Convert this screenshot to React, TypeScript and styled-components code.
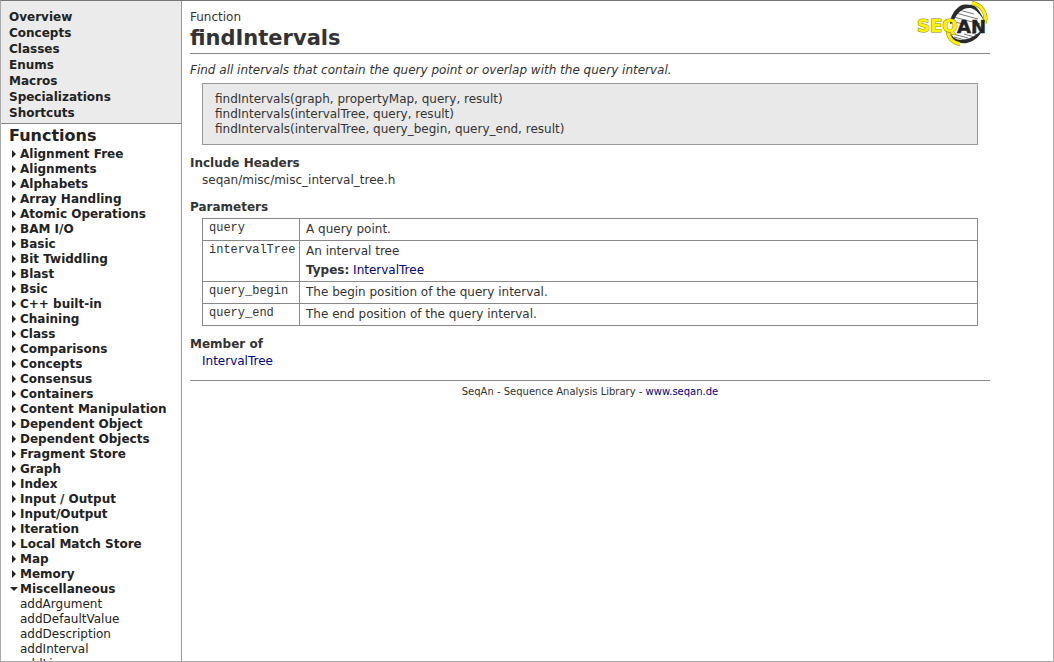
import React from "react";
import styled, { createGlobalStyle, css } from "styled-components";

const GlobalStyle = createGlobalStyle`
  *, *::before, *::after { box-sizing: border-box; }
  body {
    margin: 0;
    background: #fff;
    color: #333;
    font: 12px/15px "DejaVu Sans", Verdana, sans-serif;
  }
  ul { list-style: none; margin: 0; padding: 0; }
`;

const Frame = styled.div`
  display: flex;
  height: 100vh;
  border: 1px solid #aaa;
  border-top-color: #777;
`;

const Sidebar = styled.aside`
  flex: 0 0 181px;
  overflow: hidden;
  border-right: 1px solid #999;
`;

const TopNav = styled.nav`
  padding: 8px 8px 2px;
  background: #ebebeb;
  border-bottom: 1px solid #888;
  line-height: 16px;
`;

const NavLink = styled.a<{ $bold?: boolean }>`
  color: #222;
  text-decoration: none;
  white-space: nowrap;
  font-weight: ${(p) => (p.$bold ? 700 : 400)};
`;

const SidebarTitle = styled.h2`
  margin: 0;
  padding: 1px 8px 0;
  color: #222;
  font-size: 16px;
  line-height: 22px;
`;

const Tree = styled.ul`
  padding-left: 8px;
`;

const TreeRow = styled.div`
  display: flex;
  align-items: center;
`;

const Marker = styled.span<{ $open?: boolean }>`
  flex: 0 0 11px;
  display: flex;
  padding: 0 0 2px ${(p) => (p.$open ? 1 : 3)}px;

  &::before {
    content: "";
    border: 4px solid transparent;
    ${(p) =>
      p.$open
        ? css`
            border-top-color: #222;
            border-bottom: 0;
          `
        : css`
            border-left-color: #222;
            border-right: 0;
          `}
  }
`;

const SubTree = styled.ul`
  && { padding-left: 11px; }
`;

const Main = styled.main`
  flex: 1;
  min-width: 0;
  overflow: auto;
  padding: 0 8px;
`;

const Page = styled.div`
  max-width: 800px;
`;

const Header = styled.header`
  display: flex;
  justify-content: space-between;
  align-items: flex-start;
  height: 53px;
  border-bottom: 1px solid #888;
`;

const Kind = styled.div`
  padding-top: 9px;
`;

const Title = styled.h1`
  margin: 0;
  font-size: 21px;
  line-height: 26px;
`;

const Summary = styled.p`
  margin: 9px 0 5px;
  font-style: italic;
`;

const Signatures = styled.div`
  margin: 0 12px;
  padding: 8px 12px 7px;
  border: 1px solid #999;
  background: #e9e9e9;
`;

const Section = styled.section`
  margin-top: 10px;
`;

const Heading = styled.h3`
  margin: 0;
  font-size: 12px;
  line-height: 16px;
`;

const SectionBody = styled.div`
  padding: 2px 12px 1px;
`;

const TableWrap = styled.div`
  padding: 3px 12px 0;
`;

const ParamTable = styled.table`
  width: 100%;
  table-layout: fixed;
  border-collapse: collapse;

  th, td {
    border: 1px solid #888;
    padding: 3px 6px;
    text-align: left;
    vertical-align: top;
    font-weight: 400;
  }
  th {
    width: 97px;
    font-family: "Liberation Mono", "Courier New", monospace;
    font-size: 12px;
    line-height: 12px;
    white-space: nowrap;
  }
`;

const Types = styled.div`
  margin-top: 4px;
`;

const DocLink = styled.a`
  color: #000080;
  text-decoration: none;
`;

const Footer = styled.footer`
  margin-top: 10px;
  padding-top: 4px;
  border-top: 1px solid #888;
  font-size: 10px;
  line-height: 14px;
  text-align: center;
`;

const pages = ["Overview", "Concepts", "Classes", "Enums", "Macros", "Specializations", "Shortcuts"];

const groups = [
  "Alignment Free", "Alignments", "Alphabets", "Array Handling", "Atomic Operations",
  "BAM I/O", "Basic", "Bit Twiddling", "Blast", "Bsic", "C++ built-in", "Chaining",
  "Class", "Comparisons", "Concepts", "Consensus", "Containers", "Content Manipulation",
  "Dependent Object", "Dependent Objects", "Fragment Store", "Graph", "Index",
  "Input / Output", "Input/Output", "Iteration", "Local Match Store", "Map", "Memory",
];

const miscellaneous = ["addArgument", "addDefaultValue", "addDescription", "addInterval", "addLine"];

const signatures = [
  "findIntervals(graph, propertyMap, query, result)",
  "findIntervals(intervalTree, query, result)",
  "findIntervals(intervalTree, query_begin, query_end, result)",
];

const params: { name: string; text: string; type?: string }[] = [
  { name: "query", text: "A query point." },
  { name: "intervalTree", text: "An interval tree", type: "IntervalTree" },
  { name: "query_begin", text: "The begin position of the query interval." },
  { name: "query_end", text: "The end position of the query interval." },
];

function Logo() {
  return (
    <svg width="74" height="48" viewBox="0 0 74 48" role="img" aria-label="SeqAn">
      <path d="M43 9L58 13M40 12L62 18M38 16L64 23M36 20L50 24M37 33L52 37M38 36L49 39M48 33L58 36M56 32L62 34" fill="none" stroke="#777" strokeWidth="1" />
      <path d="M34 23C34 16 38 9 44 5C48 3 55 3 60 6C64 10 66 15 68 19C64 14 61 9 55 7C47 6 40 12 37 22Z" fill="#2b2b2b" />
      <path d="M35 32C36 36 40 39 46 39C54 38 61 34 67 28C64 35 59 40 51 42C42 43 35 40 35 32Z" fill="#2b2b2b" />
      <path d="M56 2C66 4 71 12 69 22" fill="none" stroke="#8a8200" strokeWidth="4" />
      <path d="M56 2C66 4 71 12 69 22" fill="none" stroke="#fff200" strokeWidth="3" />
      <path d="M32 30C32 37 37 42 44 43" fill="none" stroke="#8a8200" strokeWidth="4" />
      <path d="M32 30C32 37 37 42 44 43" fill="none" stroke="#fff200" strokeWidth="3" />
      <g fontFamily="DejaVu Sans, sans-serif" fontWeight="700" fontSize="18">
        <text x="1" y="31" fill="#fff200" stroke="#8a8200" strokeWidth="1" paintOrder="stroke">SEQ</text>
        <text x="41" y="32" fill="#222" stroke="#222" strokeWidth="0.5">AN</text>
      </g>
    </svg>
  );
}

export default function App() {
  return (
    <>
      <GlobalStyle />
      <Frame>
        <Sidebar>
          <TopNav>
            <ul>
              {pages.map((p) => (
                <li key={p}><NavLink href="#" $bold>{p}</NavLink></li>
              ))}
            </ul>
          </TopNav>
          <SidebarTitle>Functions</SidebarTitle>
          <Tree>
            {groups.map((g) => (
              <li key={g}>
                <TreeRow><Marker /><NavLink href="#" $bold>{g}</NavLink></TreeRow>
              </li>
            ))}
            <li>
              <TreeRow><Marker $open /><NavLink href="#" $bold>Miscellaneous</NavLink></TreeRow>
              <SubTree>
                {miscellaneous.map((m) => (
                  <li key={m}><NavLink href="#">{m}</NavLink></li>
                ))}
              </SubTree>
            </li>
          </Tree>
        </Sidebar>
        <Main>
          <Page>
            <Header>
              <div>
                <Kind>Function</Kind>
                <Title>findIntervals</Title>
              </div>
              <Logo />
            </Header>
            <Summary>Find all intervals that contain the query point or overlap with the query interval.</Summary>
            <Signatures>
              {signatures.map((s) => <div key={s}>{s}</div>)}
            </Signatures>
            <Section>
              <Heading>Include Headers</Heading>
              <SectionBody>seqan/misc/misc_interval_tree.h</SectionBody>
            </Section>
            <Section>
              <Heading>Parameters</Heading>
              <TableWrap>
                <ParamTable>
                  <tbody>
                    {params.map((p) => (
                      <tr key={p.name}>
                        <th scope="row">{p.name}</th>
                        <td>
                          {p.text}
                          {p.type && <Types><b>Types:</b> <DocLink href="#">{p.type}</DocLink></Types>}
                        </td>
                      </tr>
                    ))}
                  </tbody>
                </ParamTable>
              </TableWrap>
            </Section>
            <Section>
              <Heading>Member of</Heading>
              <SectionBody><DocLink href="#">IntervalTree</DocLink></SectionBody>
            </Section>
            <Footer>
              SeqAn - Sequence Analysis Library - <DocLink href="#">www.seqan.de</DocLink>
            </Footer>
          </Page>
        </Main>
      </Frame>
    </>
  );
}
